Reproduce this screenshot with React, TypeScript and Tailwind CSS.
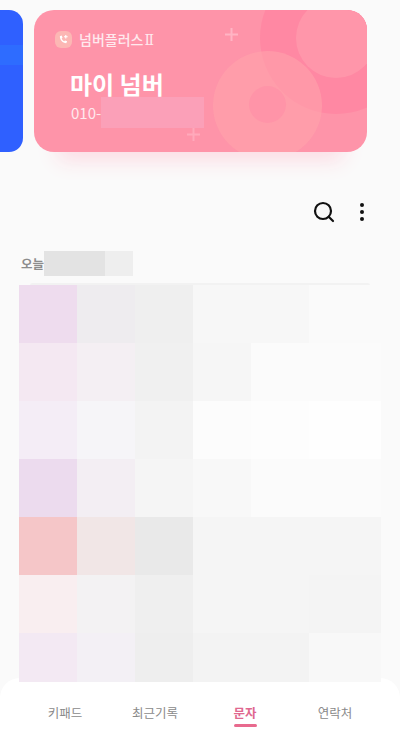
import { Search } from "lucide-react";

const rows = [
  ["bg-[#eedcee]", "bg-[#eeecef]", "bg-[#efefef]", "bg-[#f7f7f7]", "bg-[#f7f7f7]", "bg-[#fafafa]"],
  ["bg-[#f4e8f2]", "bg-[#f4eff3]", "bg-[#f0f0f0]", "bg-[#f6f6f6]", "bg-[#fbfbfb]", "bg-[#fbfbfb]"],
  ["bg-[#f4edf6]", "bg-[#f6f5f8]", "bg-[#f3f3f3]", "bg-[#fcfcfc]", "bg-[#fdfdfd]", "bg-[#fefefe]"],
  ["bg-[#ecdbee]", "bg-[#f3eef3]", "bg-[#f5f5f5]", "bg-[#f8f8f8]", "bg-[#fbfbfb]", "bg-[#fbfbfb]"],
  ["bg-[#f5c6c8]", "bg-[#f1e6e6]", "bg-[#e9e9e9]", "bg-[#f5f5f5]", "bg-[#f5f5f5]", "bg-[#f5f5f5]"],
  ["bg-[#f9eef0]", "bg-[#f3f2f3]", "bg-[#efefef]", "bg-[#f5f5f5]", "bg-[#f5f5f5]", "bg-[#f4f4f4]"],
  ["bg-[#f3e9f3]", "bg-[#f3f0f5]", "bg-[#eeeeee]", "bg-[#f3f3f3]", "bg-[#f3f3f3]", "bg-[#f8f8f8]"],
];

const tabs = ["키패드", "최근기록", "문자", "연락처"];

function CardArt() {
  return (
    <svg className="absolute inset-0" width="333" height="142" viewBox="0 0 333 142" fill="none">
      <circle cx="302" cy="28" r="76" fill="#ff88a3" />
      <circle cx="302" cy="28" r="40" fill="#ff96aa" />
      <circle cx="233.500" cy="95.500" r="54.500" fill="#ffa3ab" fillOpacity="0.6" />
      <circle cx="233.500" cy="94.500" r="18.500" fill="#ff94a8" />
      <path d="M197.500 18v13M191 24.500h13" stroke="#ffb4c4" strokeWidth="2" />
      <path d="M159.500 118v13M153 124.500h13" stroke="#ffa9bb" strokeWidth="2" />
    </svg>
  );
}

export default function App() {
  return (
    <div
      className="w-[400px] h-[751px] overflow-hidden bg-[#fafafa]"
      style={{ fontFamily: '"Noto Sans CJK KR", "Noto Sans", sans-serif' }}
    >
      {/* Number cards */}
      <div className="flex gap-[11px] pt-[10px]">
        <div className="w-[23px] h-[142px] rounded-r-[14px] bg-[#2f60ff] pt-[35px]">
          <div className="h-[20px] bg-[#2e6cff]" />
        </div>
        <div className="relative w-[333px] h-[142px] rounded-[20px] bg-[#fe94a9] overflow-hidden pl-[21px] pt-[19px] shadow-[0_32px_20px_-24px_#fcdbe3]">
          <CardArt />
          <div className="relative flex items-center gap-[7px]">
            <div className="w-[17px] h-[17px] rounded-[6px] bg-[#fcb7b4] flex items-center justify-center">
              <svg width="11" height="11" viewBox="0 0 12 12" fill="none">
                <path d="M2 2.500c0 4 3 7.500 7 7.500l1-2-2.300-1-1 1C5.300 7.400 4.400 6.300 4 5l1-1-1-2.300z" fill="#fff" />
                <path d="M8.500 1v4M6.500 3h4" stroke="#fff" strokeWidth="1.200" />
              </svg>
            </div>
            <span className="text-[14px] leading-[20px] font-medium text-[#ffe9ee]">
              넘버플러스<span className="ml-[1px] font-['DejaVu_Serif'] text-[14px] font-normal">Ⅱ</span>
            </span>
          </div>
          <div className="relative ml-[15px] mt-[18px] text-[24px] leading-[32px] font-bold text-white">마이 넘버</div>
          <div className="relative ml-[16px] mt-[3px] flex items-start">
            <span className="text-[15px] leading-[20px] text-[#ffe9ee]">010-</span>
            <div className="w-[103px] h-[31px] -mt-[6px] bg-[#fba0b8]" />
          </div>
        </div>
      </div>

      {/* Toolbar */}
      <div className="flex items-center justify-end gap-[24px] pr-[36px] mt-[48px]">
        <Search size={24} strokeWidth={2.2} className="text-[#111]" />
        <div className="flex flex-col gap-[3px]">
          <div className="w-[4px] h-[4px] rounded-full bg-[#111]" />
          <div className="w-[4px] h-[4px] rounded-full bg-[#111]" />
          <div className="w-[4px] h-[4px] rounded-full bg-[#111]" />
        </div>
      </div>

      {/* Date header */}
      <div className="flex items-center pl-[21px] mt-[27px]">
        <span className="text-[12.500px] leading-[20px] font-bold text-[#8c8c8c]">오늘</span>
        <div className="w-[61px] h-[25px] bg-[#e3e3e3]" />
        <div className="w-[28px] h-[25px] bg-[#eeeeee]" />
      </div>

      {/* Message list */}
      <div className="mx-[30px] mt-[7px] h-[2px] rounded-t-[8px] bg-[#f2f2f2]" />
      <div className="relative z-10 ml-[19px] w-[362px]">
        {rows.map((row, i) => (
          <div key={i} className={i === 6 ? "flex h-[49px]" : "flex h-[58px]"}>
            {row.map((c, j) => (
              <div key={j} className={`w-[58px] ${c}`} />
            ))}
            <div className={`w-[14px] ${row[5]}`} />
          </div>
        ))}
      </div>

      {/* Bottom tabs */}
      <div className="-mt-[4px] h-[73px] rounded-t-[20px] bg-white px-[20px] pt-[25px] grid grid-cols-4">
        {tabs.map((t) => (
          <div key={t} className="flex flex-col items-center">
            {t === "문자" ? (
              <>
                <span className="text-[12.500px] leading-[20px] font-bold text-[#e0688f]">{t}</span>
                <div className="w-[23px] h-[3px] mt-[1px] rounded-full bg-[#e86a8e]" />
              </>
            ) : (
              <span className="text-[12.500px] leading-[20px] text-[#8a8a8a]">{t}</span>
            )}
          </div>
        ))}
      </div>
    </div>
  );
}
